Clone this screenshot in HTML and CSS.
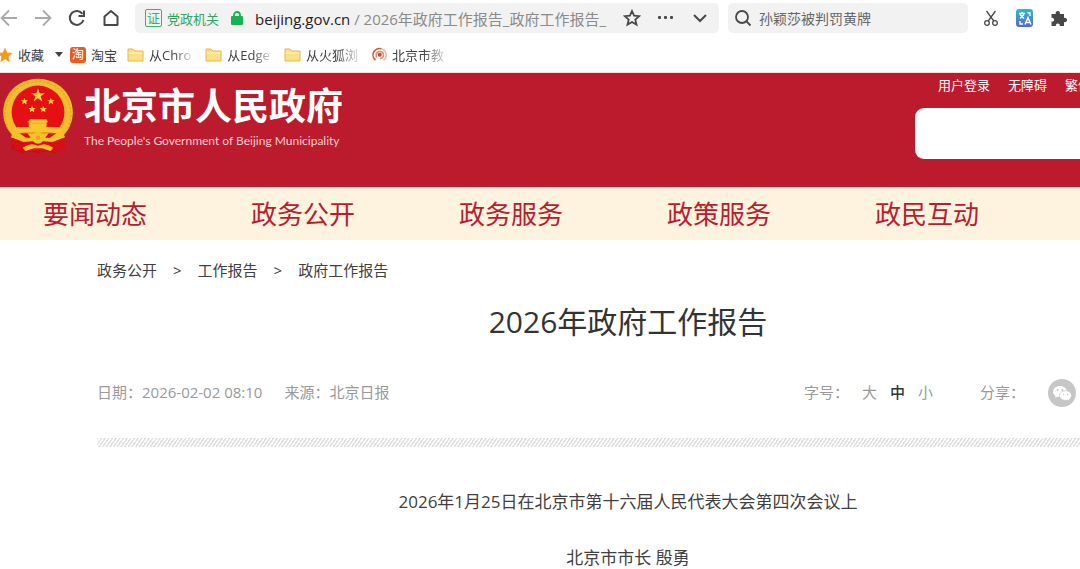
FILE: index.html
```html
<!doctype html>
<html lang="zh-CN">
<head>
<meta charset="utf-8">
<title>2026年政府工作报告_政府工作报告_北京市人民政府</title>
<link rel="stylesheet" href="styles.css">
</head>
<body>

<div class="toolbar">
	<div class="tools">
		<button class="icon" aria-label="后退"><svg width="18" height="18" viewBox="0 0 18 18" fill="none" stroke="#a9a9a9" stroke-width="1.8"><path d="M17 9H2M9 1.500 1.500 9 9 16.500"/></svg></button>
		<button class="icon" aria-label="前进"><svg width="18" height="18" viewBox="0 0 18 18" fill="none" stroke="#a9a9a9" stroke-width="1.800"><path d="M1 9h15M9 1.500 16.500 9 9 16.500"/></svg></button>
		<button class="icon" aria-label="刷新"><svg width="18" height="18" viewBox="0 0 18 18" fill="none" stroke="#484848" stroke-width="2"><path d="M14.500 4.800A7 7 0 1 0 15.500 11"/><path d="M16 1.500V7h-5.500"/></svg></button>
		<button class="icon" aria-label="主页"><svg width="18" height="18" viewBox="0 0 18 18" fill="none" stroke="#484848" stroke-width="2" stroke-linejoin="round"><path d="M2.500 16V7.500L9 2l6.500 5.500V16z"/></svg></button>
	</div>
	<div class="address">
		<span class="cert">证</span>
		<span class="org">党政机关</span>
		<svg class="lock" width="12" height="14" viewBox="0 0 12 14"><path d="M3 6V4a3 3 0 0 1 6 0v2" fill="none" stroke="#14b455" stroke-width="1.800"/><rect y="5" width="12" height="9" rx="1" fill="#14b455"/></svg>
		<a class="url" href="#"><b>beijing.gov.cn</b> / 2026年政府工作报告_政府工作报告_</a>
		<div class="actions">
			<button class="icon" aria-label="收藏此页"><svg width="18" height="18" viewBox="0 0 18 18" fill="none" stroke="#484848" stroke-width="1.800"><path d="M9 2l2.100 4.700 5.100.5-3.900 3.400 1.200 5L9 13l-4.500 2.600 1.200-5L1.800 7.200l5.100-.5z"/></svg></button>
			<button class="icon" aria-label="更多"><svg width="18" height="18" viewBox="0 0 18 18" fill="#484848"><rect x="1" y="7" width="3" height="3" rx="1"/><rect x="7" y="7" width="3" height="3" rx="1"/><rect x="13" y="7" width="3" height="3" rx="1"/></svg></button>
			<button class="icon" aria-label="展开"><svg width="18" height="18" viewBox="0 0 18 18" fill="none" stroke="#484848" stroke-width="2"><path d="M3 6l6 6 6-6"/></svg></button>
		</div>
	</div>
	<label class="find">
		<svg width="18" height="18" viewBox="0 0 18 18" fill="none" stroke="#484848" stroke-width="1.800"><circle cx="8" cy="8" r="6"/><path d="M12.200 12.200 16.500 16.500"/></svg>
		<input type="text" aria-label="搜索" value="孙颖莎被判罚黄牌">
	</label>
	<div class="tools">
		<button class="icon" aria-label="截图"><svg width="18" height="18" viewBox="0 0 18 18" fill="none" stroke="#484848" stroke-width="1.300"><path d="M4.500 2l7.300 10M13.500 2 6.200 12"/><circle cx="5" cy="14" r="2.300"/><circle cx="13" cy="14" r="2.300"/></svg></button>
		<button class="icon" aria-label="翻译"><svg width="18" height="18" viewBox="0 0 18 18"><defs><linearGradient id="tr" x1="0" y1="0" x2="0" y2="1"><stop offset="0" stop-color="#2fb9cf"/><stop offset="1" stop-color="#5b68c8"/></linearGradient></defs><rect width="17" height="18" rx="3" fill="url(#tr)"/><path d="M3 4.500h6M6 3v1.500M4 5.500l4 4M8 5.500l-4 4M4 12v3h3M11.500 4H14v3M9 15.500l3-7 3 7M10 13.500h4" fill="none" stroke="#fff" stroke-width="1.400"/></svg></button>
		<button class="icon" aria-label="扩展"><svg width="18" height="18" viewBox="0 0 18 18"><path d="M1.500 5h4.300a2.200 2.200 0 1 1 4 0H14v4a2.200 2.200 0 1 1 0 4v4h-4.300a2 2 0 1 0-3.800 0H1.500v-4.500a1.900 1.900 0 1 0 0-3.500z" fill="#484848"/></svg></button>
	</div>
</div>

<div class="bookmarks">
	<a class="mark fav" href="#"><svg width="16" height="16" viewBox="0 0 16 16"><path d="M8 .5l2.200 5 5.300.6-4 3.600 1.200 5.500L8 12.300l-4.700 2.900 1.200-5.500-4-3.600 5.300-.6z" fill="#f59a1b"/></svg><span>收藏</span><i class="caret"></i></a>
	<a class="mark" href="#"><span class="tao">淘</span><span>淘宝</span></a>
	<a class="mark" href="#"><svg width="17" height="16" viewBox="0 0 17 16"><path d="M1 14V2h5l2 2h8v10z" fill="#fbe08a" stroke="#e3b84d"/><path d="M1.500 6h14" stroke="#fff2bd"/></svg><span class="fade">从Chro</span></a>
	<a class="mark" href="#"><svg width="17" height="16" viewBox="0 0 17 16"><path d="M1 14V2h5l2 2h8v10z" fill="#fbe08a" stroke="#e3b84d"/><path d="M1.500 6h14" stroke="#fff2bd"/></svg><span class="fade">从Edge</span></a>
	<a class="mark" href="#"><svg width="17" height="16" viewBox="0 0 17 16"><path d="M1 14V2h5l2 2h8v10z" fill="#fbe08a" stroke="#e3b84d"/><path d="M1.500 6h14" stroke="#fff2bd"/></svg><span class="fade">从火狐浏</span></a>
	<a class="mark" href="#"><svg width="15" height="16" viewBox="0 0 15 16" fill="none"><path d="M3.500 13A6.500 6.500 0 0 1 2 4.500Q5 .5 9.500 1.800" stroke="#c9603c" stroke-width="1.600"/><path d="M9.500 1.800a6.500 6.500 0 0 1 2 11.500" stroke="#ecbda6" stroke-width="1.600"/><path d="M4.500 10.500Q3 6 7 4.500q4-.5 4.500 3T8 11.500" stroke="#e08a62" stroke-width="1.500"/><circle cx="7.800" cy="7.800" r="2" fill="#c8472b"/></svg><span class="fade">北京市教</span></a>
</div>

<header class="header">
	<a class="brand" href="#">
		<svg class="emblem" viewBox="8 24 212 228" aria-hidden="true">
			<path d="M42 190l-8 48 20 5 8 8 26-6 26 6 26-6 26 6 8-8 18-5-8-48z" fill="#c80b14"/>
			<path d="M36 196C-8 150 2 72 58 40q56-30 112 0c56 32 66 110 22 156l-34 24H70z" fill="#f2bd2c"/>
			<path d="M24 178C2 130 18 76 62 48q52-28 104 0c44 28 60 82 38 130" fill="none" stroke="#e0a01c" stroke-width="3" stroke-dasharray="7 5"/>
			<circle cx="114" cy="126" r="80" fill="#e60f14"/>
			<path d="M114 54l5 15h16l-13 9 5 16-13-10-13 10 5-16-13-9h16z" fill="#fbd53a"/>
			<path id="s" d="M73 83l3 7h8l-6 5 2 8-7-5-7 5 2-8-6-5h8z" fill="#fbd53a"/>
			<use href="#s" x="80"/><use href="#s" x="23" y="24"/><use href="#s" x="57" y="24"/>
			<path d="M90 148h50l4 9h-4v14h36l12 6-10 12H50l-10-12 12-6h34v-14h-4z" fill="#f8c52c"/>
			<path d="M93 160h42" stroke="#e0a01c" stroke-width="2"/>
			<path d="M40 184q74 14 148 0l8 18-40 16H72l-40-16z" fill="#f5c12b"/>
			<path d="M58 190h24l10 14H78zM170 190h-24l-10 14h14z" fill="#d3101a"/>
			<path d="M36 205l34 12 44-4 44 4 34-12 6 34-22 4-14 6-20-8-22 6-22-6-20 8-14-6-22-4z" fill="#d80d16"/>
			<circle cx="114" cy="204" r="18" fill="#f5c12b"/>
			<circle cx="114" cy="204" r="7" fill="#e6a51f"/>
			<path d="M68 234q22-18 46-6 24-12 46 6l-8 10-26-8h-24l-26 8z" fill="#f5c12b"/>
		</svg>
		<span class="brand-text">
			<strong>北京市人民政府</strong>
			<small>The People's Government of Beijing Municipality</small>
		</span>
	</a>
	<div class="user">
		<div class="links">
			<a href="#">用户登录</a>
			<a href="#">无障碍</a>
			<a href="#">繁体</a>
		</div>
		<input class="search" type="text" aria-label="站内搜索">
	</div>
</header>

<nav class="nav">
	<a href="#">要闻动态</a>
	<a href="#">政务公开</a>
	<a href="#">政务服务</a>
	<a href="#">政策服务</a>
	<a href="#">政民互动</a>
</nav>

<main class="article">
	<div class="crumbs">
		<a href="#">政务公开</a><span>&gt;</span><a href="#">工作报告</a><span>&gt;</span><a href="#">政府工作报告</a>
	</div>
	<h1>2026年政府工作报告</h1>
	<div class="meta">
		<span>日期：2026-02-02 08:10</span>
		<span>来源：北京日报</span>
		<div class="sizes">
			<span>字号：</span>
			<button>大</button>
			<button class="on">中</button>
			<button>小</button>
		</div>
		<div class="share">
			<span>分享：</span>
			<button class="icon" aria-label="微信"><svg width="28" height="28" viewBox="0 0 28 28"><circle cx="14" cy="14" r="14" fill="#c6c6c6"/><path d="M12 7c-4 0-7 2.500-7 5.600 0 1.800 1 3.300 2.600 4.300L7 19l2.600-1.300c4.800 1.300 9.400-1.500 9.400-5.100C19 9.500 16 7 12 7z" fill="#fff"/><path d="M17.500 11.800c-3.400 0-6 2.100-6 4.800s2.600 4.800 6 4.800l2-.3 2.200 1.200-.5-2c1.400-.9 2.300-2.200 2.300-3.700 0-2.700-2.600-4.800-6-4.800z" fill="#fff" stroke="#c6c6c6" stroke-width=".8"/><g fill="#c6c6c6"><circle cx="9.700" cy="11" r="1"/><circle cx="14.300" cy="11" r="1"/><circle cx="15.600" cy="15.500" r=".8"/><circle cx="19.500" cy="15.500" r=".8"/></g></svg></button>
		</div>
	</div>
	<div class="stripe"></div>
	<p>2026年1月25日在北京市第十六届人民代表大会第四次会议上</p>
	<p>北京市市长 殷勇</p>
</main>

</body>
</html>
```
FILE: styles.css
```css
body{
	margin:0;
	background:#fff;
	color:#404040;
	font-family:"Open Sans","Noto Sans CJK SC",sans-serif;
	font-size:15px;
	overflow-x:hidden;
}
a{
	color:inherit;
	text-decoration:none;
}
button{
	padding:0;
	border:0;
	background:none;
	color:inherit;
	font:inherit;
	cursor:pointer;
}
input{
	border:0;
	outline:0;
	font:inherit;
}
svg{
	display:block;
	flex:none;
}

/* browser bar */
.toolbar{
	display:flex;
	align-items:center;
	height:30px;
	padding:3px 12px 4px 0;
}
.tools{
	display:flex;
	gap:16px;
}
.address{
	display:flex;
	flex:1;
	align-items:center;
	height:30px;
	margin:0 9px 0 15px;
	padding:0 10px;
	border-radius:5px;
	background:#f2f2f2;
	white-space:nowrap;
}
.cert{
	border:1px solid #35b568;
	border-radius:2px;
	color:#35b568;
	font-size:13px;
	line-height:16px;
	padding:0 1px;
}
.org{
	margin:0 12px 0 5px;
	color:#35a560;
	font-size:13px;
}
.url{
	flex:1;
	margin-left:12px;
	color:#8a8a8a;
}
.url b{
	color:#222;
	font-weight:normal;
}
.actions{
	display:flex;
	gap:16px;
}
.find{
	display:flex;
	align-items:center;
	gap:7px;
	width:228px;
	height:30px;
	margin-right:14px;
	padding:0 6px;
	border-radius:5px;
	background:#f2f2f2;
}
.find input{
	flex:1;
	min-width:0;
	padding:0;
	background:none;
	color:#666;
	font-size:14px;
}

.bookmarks{
	display:flex;
	align-items:center;
	gap:14px;
	height:35px;
	border-bottom:1px solid #fbdcdc;
	font-size:13px;
	white-space:nowrap;
}
.mark{
	display:flex;
	align-items:center;
	gap:5px;
}
.mark:nth-child(2){
	margin-right:-4px;
}
.fav{
	margin:0 -7px 0 -3px;
}
.caret{
	margin-left:6px;
	border:4px solid transparent;
	border-top:5px solid #444;
	border-bottom:0;
}
.tao{
	width:16px;
	height:16px;
	border-radius:3px;
	background:#ea5b1c;
	color:#fff;
	font-size:12px;
	line-height:15px;
	text-align:center;
}
.fade{
	-webkit-mask-image:linear-gradient(to right,#000 60%,rgba(0,0,0,.2));
	mask-image:linear-gradient(to right,#000 60%,rgba(0,0,0,.2));
}

/* site header */
.header{
	display:flex;
	justify-content:space-between;
	height:114px;
	background:#bc1b2d;
	color:#fff;
	overflow:hidden;
}
.brand{
	display:flex;
	align-items:flex-start;
	gap:11px;
	padding:5px 0 0 3px;
}
.emblem{
	width:70px;
	height:76px;
}
.brand-text strong{
	display:block;
	margin-top:6px;
	font-size:37px;
	line-height:44px;
}
.brand-text small{
	display:block;
	margin-top:3px;
	color:#f6cfd2;
	font-family:Lato,"Open Sans",sans-serif;
	font-size:12px;
	line-height:20px;
}
.user{
	width:225px;
	margin-right:-60px;
}
.links{
	display:flex;
	gap:18px;
	padding-left:23px;
	font-size:13px;
	line-height:24px;
}
.search{
	display:block;
	box-sizing:border-box;
	width:100%;
	height:51px;
	margin-top:11px;
	padding:0 16px;
	border-radius:9px;
	background:#fff;
}

.nav{
	display:flex;
	gap:104px;
	padding:2px 0 0 43px;
	background:#fdf3df;
	color:#b5202f;
	font-size:26px;
	line-height:51px;
	white-space:nowrap;
}

/* the content column is wider than the window and runs off its right side */
.article{
	margin:0 -79px 0 97px;
	padding-top:15px;
}
.crumbs{
	line-height:30px;
}
.crumbs span{
	margin:0 16px;
}
h1{
	margin:15px 0 35px;
	color:#333;
	font-size:30px;
	font-weight:normal;
	line-height:44px;
	text-align:center;
}
.meta{
	display:flex;
	align-items:center;
	height:28px;
	padding-right:83px;
	color:#999;
	line-height:20px;
}
.meta > span{
	margin-right:22px;
}
.meta span,
.sizes button{
	padding-bottom:3px;
}
.sizes{
	display:flex;
	gap:13px;
	margin-left:auto;
}
.sizes .on{
	color:#333;
	font-weight:500;
}
.share{
	display:flex;
	align-items:center;
	gap:23px;
	margin-left:47px;
}
.stripe{
	height:9px;
	margin:31px 0 41px;
	background:repeating-linear-gradient(125deg,#dedede 0,#dedede 1px,#fff 2px,#fff 3px);
}
p{
	margin:0 0 28px;
	font-size:17px;
	line-height:28px;
	text-align:center;
}
p:last-child{
	margin-bottom:0;
}
```
